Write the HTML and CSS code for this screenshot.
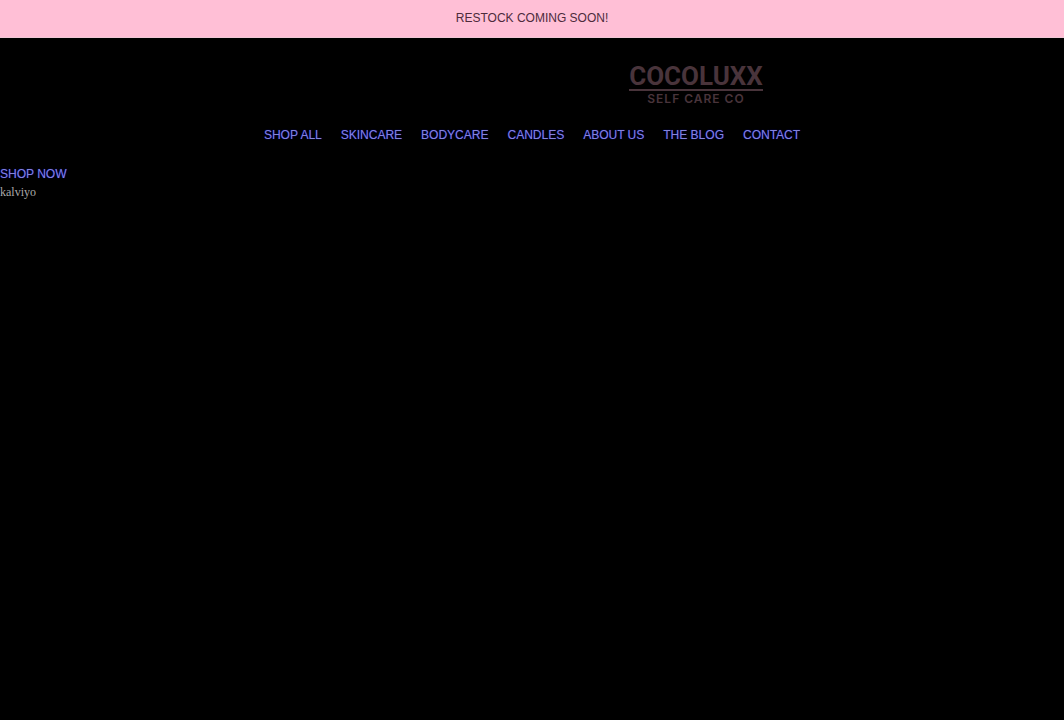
FILE: index.html
```
<!DOCTYPE html>
<html lang="en">
  <head>
    <meta charset="UTF-8">
    <meta name="viewport" content="width=device-width, initial-scale=1">
    <title>Cocoluxx Self Care Co</title>
    <link rel="stylesheet" href="styles.css">
  </head>
  <body>
    <div class="announcement">RESTOCK COMING SOON!</div>
    <header class="header">
      <a class="logo" href="#" aria-label="Cocoluxx Self Care Co">
        <span class="logo-name">COCOLUXX</span>
        <span class="logo-tagline">SELF CARE CO</span>
      </a>
      <nav class="nav">
        <a href="#">SHOP ALL</a>
        <a href="#">SKINCARE</a>
        <a href="#">BODYCARE</a>
        <a href="#">CANDLES</a>
        <a href="#">ABOUT US</a>
        <a href="#">THE BLOG</a>
        <a href="#">CONTACT</a>
      </nav>
    </header>
    <main class="main">
      <a class="shop-now" href="#">SHOP NOW</a>
      <p class="note">kalviyo</p>
    </main>
  </body>
</html>
```
FILE: styles.css
```
body {
  margin: 0;
  background: #000;
  font-family: "Liberation Sans", Arial, sans-serif;
  font-size: 12px;
}

a {
  color: #8484d8;
  text-decoration: none;
  text-shadow: 0 0 1px #0000ee;
}

.announcement {
  padding: 10px;
  background: #ffbfd6;
  border-bottom: 1px solid #f0c8d6;
  color: #4d2b3b;
  line-height: 17px;
  text-align: center;
}

.header {
  display: flex;
  flex-direction: column;
  align-items: center;
  padding-top: 26px;
}

.logo {
  display: flex;
  flex-direction: column;
  align-items: center;
  margin-left: 328px;
  color: #49343b;
  font-family: Roboto, sans-serif;
  font-weight: bold;
  text-shadow: none;
}

.logo-name {
  border-bottom: 2px solid #49343b;
  font-size: 26px;
  line-height: 25px;
}

.logo-tagline {
  font-family: Inter, sans-serif;
  font-size: 12px;
  font-weight: 600;
  line-height: 16px;
  letter-spacing: 1px;
}

.nav {
  display: flex;
  flex-wrap: wrap;
  justify-content: center;
  gap: 19px;
  margin-top: 18px;
  line-height: 20px;
}

.main {
  padding-top: 19px;
}

.shop-now {
  display: block;
  width: fit-content;
  line-height: 20px;
}

.note {
  margin: 0;
  color: #a8a8a8;
  font-family: "Liberation Serif", serif;
  line-height: 16px;
}
```
